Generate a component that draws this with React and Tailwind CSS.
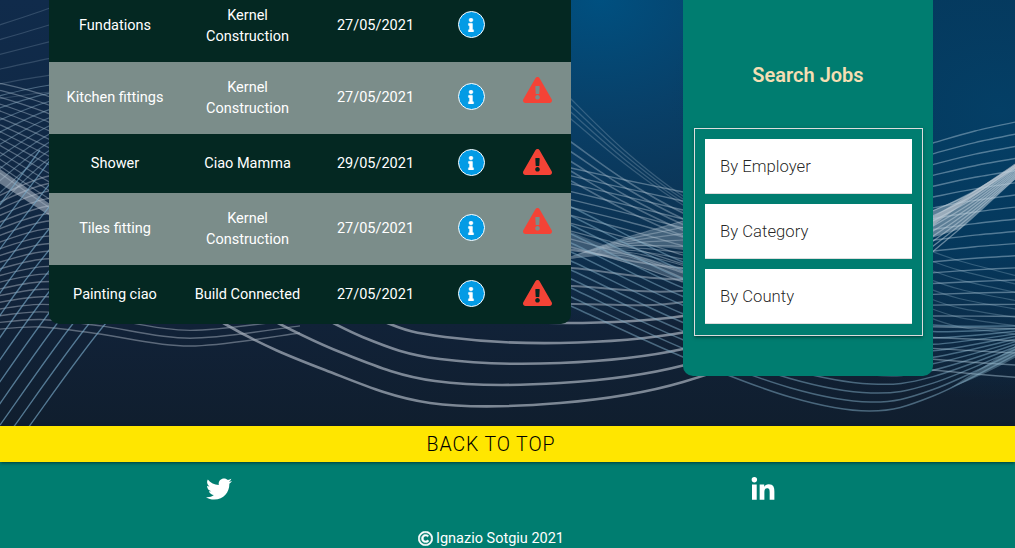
import React from "react";
import { FaTwitter, FaLinkedinIn, FaInfo, FaExclamationTriangle, FaRegCopyright } from "react-icons/fa";

const jobs = [
  { title: "Fundations", employer: "Kernel Construction", date: "27/05/2021", warn: false },
  { title: "Kitchen fittings", employer: "Kernel Construction", date: "27/05/2021", warn: true },
  { title: "Shower", employer: "Ciao Mamma", date: "29/05/2021", warn: true },
  { title: "Tiles fitting", employer: "Kernel Construction", date: "27/05/2021", warn: true },
  { title: "Painting ciao", employer: "Build Connected", date: "27/05/2021", warn: true },
];

// Smooth path through a list of points (Catmull-Rom converted to Bezier).
function smooth(p) {
  let d = `M${p[0][0]} ${p[0][1]}`;
  for (let i = 0; i < p.length - 1; i++) {
    const a = p[i - 1] || p[i];
    const b = p[i];
    const c = p[i + 1];
    const e = p[i + 2] || c;
    d += `C${b[0] + (c[0] - a[0]) / 6} ${b[1] + (c[1] - a[1]) / 6} ${c[0] - (e[0] - b[0]) / 6} ${c[1] - (e[1] - b[1]) / 6} ${c[0]} ${c[1]}`;
  }
  return d;
}

// A sheaf of n curves blended from one curve to another.
function Sheaf({ from, to, n, color, width, opacity }) {
  const paths = Array.from({ length: n }, (_, i) => {
    const t = n === 1 ? 0 : i / (n - 1);
    return smooth(from.map((q, k) => [q[0] + (to[k][0] - q[0]) * t, q[1] + (to[k][1] - q[1]) * t]));
  });
  return (
    <g fill="none" stroke={color} strokeWidth={width} opacity={opacity}>
      {paths.map((d, i) => <path key={i} d={d} />)}
    </g>
  );
}

function Waves() {
  return (
    <svg className="absolute inset-0" width="1015" height="427" viewBox="0 0 1015 427" aria-hidden="true">
      <defs>
        <linearGradient id="base" x1="0" y1="0" x2="0" y2="1">
          <stop offset="0" stopColor="#102b4b" />
          <stop offset="0.5" stopColor="#102742" />
          <stop offset="0.76" stopColor="#112238" />
          <stop offset="1" stopColor="#101e2e" />
        </linearGradient>
        <radialGradient id="glow" gradientUnits="userSpaceOnUse" cx="0" cy="0" r="1" gradientTransform="translate(600 0) scale(430 330)">
          <stop offset="0" stopColor="#005080" />
          <stop offset="0.35" stopColor="#08416a" stopOpacity="0.95" />
          <stop offset="0.7" stopColor="#0a385b" stopOpacity="0.7" />
          <stop offset="1" stopColor="#0a385b" stopOpacity="0" />
        </radialGradient>
        <radialGradient id="side" gradientUnits="userSpaceOnUse" cx="0" cy="0" r="1" gradientTransform="translate(1000 110) scale(330 290)">
          <stop offset="0" stopColor="#043f66" />
          <stop offset="0.5" stopColor="#043a5f" stopOpacity="0.9" />
          <stop offset="1" stopColor="#043a5f" stopOpacity="0" />
        </radialGradient>
      </defs>
      <rect width="1015" height="427" fill="url(#base)" />
      <rect width="1015" height="427" fill="url(#glow)" />
      <rect width="1015" height="427" fill="url(#side)" />

      {/* left fan */}
      <Sheaf n={6} color="#a9bfd2" width={1.2} opacity={0.22}
        from={[[-10, 28], [50, 8], [120, -20]]} to={[[-10, 100], [50, 92], [120, 88]]} />
      <Sheaf n={14} color="#b9c9d8" width={1.2} opacity={0.4}
        from={[[-10, 81], [50, 97], [120, 130]]} to={[[-10, 166], [50, 208], [120, 250]]} />
      <Sheaf n={10} color="#9dbdd2" width={1.2} opacity={0.42}
        from={[[-10, 98], [50, 85], [120, 80]]} to={[[-10, 215], [50, 158], [120, 120]]} />
      <path d="M-10 162 L50 204 L90 240 L50 216 L-10 177Z" fill="#b4bfcc" opacity=".55" />

      {/* left shallow wave */}
      <Sheaf n={21} color="#c3ccd8" width={1.4} opacity={0.42}
        from={[[-10, 200], [49, 176], [120, 172], [190, 190], [300, 190]]}
        to={[[-10, 330], [40, 327], [100, 334], [190, 346], [300, 333]]} />

      {/* left diagonals */}
      <Sheaf n={13} color="#78a9c8" width={1.3} opacity={0.65}
        from={[[-140, 410], [-40, 260], [40, 150]]} to={[[28, 428], [106, 323], [190, 235]]} />

      {/* wide bowls */}
      <Sheaf n={5} color="#aab3bf" width={2.6} opacity={0.7}
        from={[[100, 240], [225, 324], [325, 370], [430, 403], [560, 403], [683, 382], [790, 335], [933, 224], [1030, 157]]}
        to={[[220, 220], [320, 257], [400, 304], [450, 315], [560, 323], [683, 316], [790, 290], [933, 218], [1030, 155]]} />
      <Sheaf n={4} color="#b4bfcb" width={2} opacity={0.5}
        from={[[500, 305], [571, 304], [683, 302], [800, 265], [933, 216]]}
        to={[[500, 250], [571, 250], [683, 268], [800, 260], [933, 216]]} />

      {/* centre sheets */}
      <Sheaf n={4} color="#a5bacb" width={1.3} opacity={0.28}
        from={[[540, 66], [571, 99], [625, 151], [683, 196], [740, 225]]}
        to={[[540, 92], [571, 119], [625, 164], [683, 205], [740, 235]]} />
      <Sheaf n={5} color="#a5bacb" width={1.6} opacity={0.42}
        from={[[540, 120], [571, 142], [625, 180], [683, 213], [740, 235]]}
        to={[[540, 165], [571, 181], [625, 210], [683, 236], [740, 255]]} />
      <Sheaf n={11} color="#b8cad7" width={1.3} opacity={0.42}
        from={[[540, 161], [571, 168], [625, 180], [683, 192]]}
        to={[[540, 238], [571, 247], [625, 262], [683, 282]]} />
      <path d="M571 232 Q620 252 683 268 L683 282 Q620 259 571 249Z" fill="#b5c2cf" opacity=".28" />
      <path d="M571 257 Q610 242 683 221 L683 250 Q620 240 571 257Z" fill="#a9bdcc" opacity=".35" />
      <Sheaf n={10} color="#b8c8d5" width={1.2} opacity={0.4}
        from={[[571, 257], [625, 238], [683, 221]]} to={[[571, 258], [625, 256], [683, 278]]} />

      {/* blue swells */}
      <Sheaf n={12} color="#83aec7" width={1.5} opacity={0.5}
        from={[[540, 292], [571, 306], [683, 357], [790, 397], [870, 411], [933, 396], [1030, 347]]}
        to={[[540, 200], [571, 207], [683, 262], [790, 295], [875, 312], [933, 325], [1030, 326]]} />
      <Sheaf n={8} color="#87aabf" width={1.2} opacity={0.35}
        from={[[920, 247], [960, 261], [1025, 278]]} to={[[920, 314], [960, 327], [1025, 335]]} />

      {/* right sheets */}
      <Sheaf n={22} color="#a8c2d3" width={1.4} opacity={0.48}
        from={[[900, 153], [933, 143], [975, 131], [1025, 120]]}
        to={[[900, 367], [933, 370], [975, 374], [1025, 378]]} />
      <path d="M925 214 Q970 196 1018 163 L1018 177 Q982 208 960 229 L925 240Z" fill="#bdcbd6" opacity=".48" />
      <Sheaf n={9} color="#c7d6e1" width={1.3} opacity={0.5}
        from={[[925, 214], [970, 194], [1020, 162]]} to={[[925, 258], [970, 220], [1020, 174]]} />
      <path d="M950 388 Q985 366 1018 344 L1018 356 Q985 375 950 388Z" fill="#88aec4" opacity=".4" />
    </svg>
  );
}

function InfoBadge() {
  return (
    <span className="flex size-[27px] items-center justify-center rounded-full border border-white bg-[#039be5]">
      <FaInfo size={14} stroke="currentColor" strokeWidth={14} />
    </span>
  );
}

function JobRow({ job, index }) {
  const striped = index % 2 === 1;
  const tall = job.employer.startsWith("Kernel");
  return (
    <div
      className={`grid grid-cols-[132px_133px_123px_68px_66px] items-center text-center ${striped ? "bg-[#7b8d8a]" : "bg-[#042822]"} ${tall ? "h-[72px]" : "h-[59px]"} ${index === jobs.length - 1 ? "rounded-b-[10px]" : ""}`}
    >
      <div className={tall ? "pb-0.5" : ""}>{job.title}</div>
      <div className="px-2">
        {tall ? <>Kernel<br />Construction</> : job.employer}
      </div>
      <div className={tall ? "pb-0.5" : ""}>{job.date}</div>
      <div className={`flex justify-center ${tall ? "pb-[3px]" : "pb-[2px]"}`}><InfoBadge /></div>
      <div className={`flex justify-center pr-px text-[#f44336] ${tall ? "pb-4" : "pb-[3px]"}`}>
        {job.warn && <FaExclamationTriangle size={29} className="h-[26px]" />}
      </div>
    </div>
  );
}

export default function App() {
  return (
    <div className="relative flex h-[548px] w-full flex-col overflow-hidden bg-[#101e2e] font-['Roboto','Liberation_Sans',sans-serif] text-[14.5px] leading-[21px] text-white">
      <Waves />
      <main className="relative flex h-[426px] shrink-0 items-start pl-[49px]">
        <section className="-mt-[10px] w-[522px] shrink-0">
          {jobs.map((job, i) => <JobRow key={job.title} job={job} index={i} />)}
        </section>
        <aside className="ml-28 flex h-[376px] w-[250px] shrink-0 flex-col rounded-b-[10px] bg-[#007d70] pt-[62px]">
          <h2 className="text-center text-[20px] font-semibold leading-[26px] text-[#f5deb3]">Search Jobs</h2>
          <ul className="ml-[11px] mt-10 flex h-[208px] w-[229px] flex-col gap-[10px] border border-[#ddd] p-[10px] shadow-[0_2px_2px_0_rgba(0,0,0,0.14),0_3px_1px_-2px_rgba(0,0,0,0.12),0_1px_5px_0_rgba(0,0,0,0.2)]">
            {["By Employer", "By Category", "By County"].map((label) => (
              <li key={label} className="flex h-[55px] items-center border-b border-[#ddd] bg-white pl-[15px] text-[16.7px] font-[350] text-black/87">
                {label}
              </li>
            ))}
          </ul>
        </aside>
      </main>
      <a className="relative z-10 flex h-9 shrink-0 items-center justify-center bg-[#ffe600] pr-[33px] text-[19.5px] font-[350] tracking-[0.9px] text-black shadow-[0_2px_2px_0_rgba(0,0,0,0.14),0_3px_1px_-2px_rgba(0,0,0,0.12),0_1px_5px_0_rgba(0,0,0,0.2)]">
        BACK TO TOP
      </a>
      <footer className="relative flex h-[86px] shrink-0 flex-col bg-[#007d70]">
        <div className="flex h-[66px] shrink-0 pt-[14px]">
          <div className="w-[545px] pl-[206px]"><FaTwitter size={26} /></div>
          <div className="pl-[205px] pt-px"><FaLinkedinIn size={26} /></div>
        </div>
        <p className="flex items-center justify-center gap-[3px] pr-[33px]">
          <FaRegCopyright size={15} stroke="currentColor" strokeWidth={18} />
          Ignazio Sotgiu 2021
        </p>
      </footer>
    </div>
  );
}
